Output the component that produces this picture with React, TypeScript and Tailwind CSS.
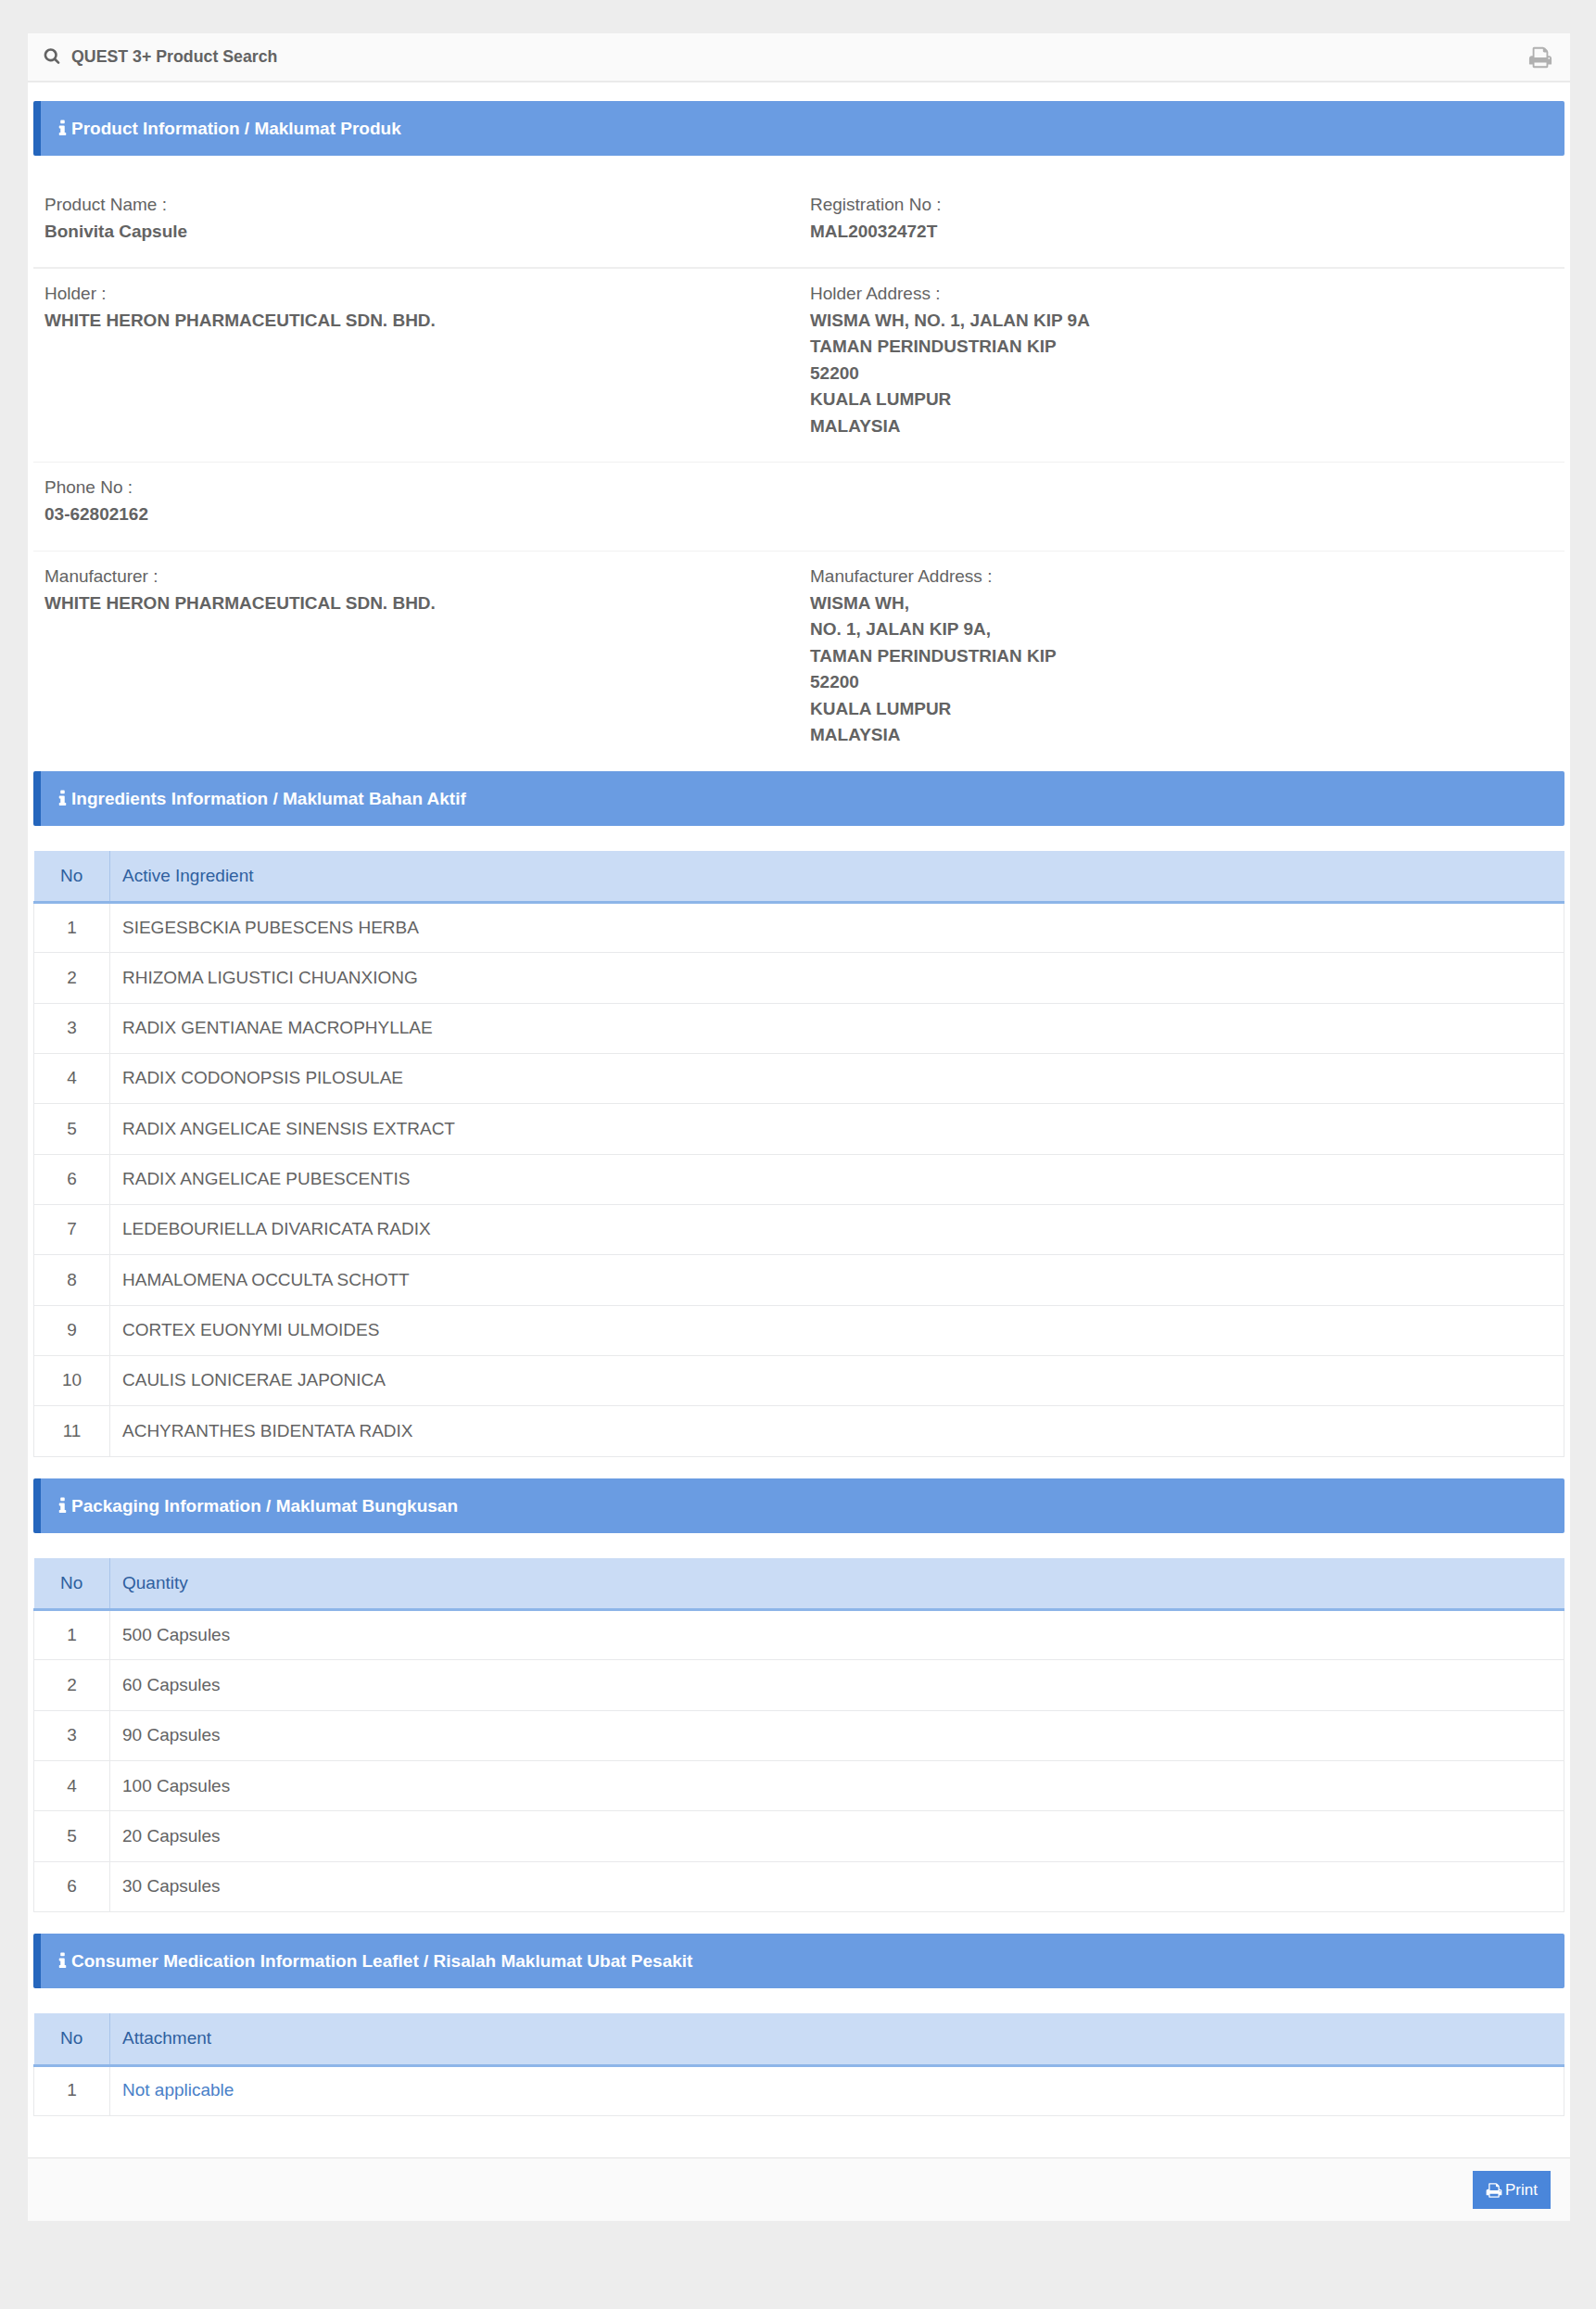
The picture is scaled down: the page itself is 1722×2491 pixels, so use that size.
import React from "react";
const ing = ["SIEGESBCKIA PUBESCENS HERBA","RHIZOMA LIGUSTICI CHUANXIONG","RADIX GENTIANAE MACROPHYLLAE","RADIX CODONOPSIS PILOSULAE","RADIX ANGELICAE SINENSIS EXTRACT","RADIX ANGELICAE PUBESCENTIS","LEDEBOURIELLA DIVARICATA RADIX","HAMALOMENA OCCULTA SCHOTT","CORTEX EUONYMI ULMOIDES","CAULIS LONICERAE JAPONICA","ACHYRANTHES BIDENTATA RADIX"];
const pack = ["500 Capsules","60 Capsules","90 Capsules","100 Capsules","20 Capsules","30 Capsules"];
const PRINT = "M448 1536h896v-256h-896v256zm0-640h896v-384h-160q-40 0-68-28t-28-68v-160h-640v640zm1152 64q0-26-19-45t-45-19-45 19-19 45 19 45 45 19 45-19 19-45zm128 0v416q0 13-9.5 22.5t-22.5 9.5h-224v160q0 40-28 68t-68 28h-960q-40 0-68-28t-28-68v-160h-224q-13 0-22.5-9.5t-9.5-22.5v-416q0-79 56.5-135.5t135.5-56.5h64v-544q0-40 28-68t68-28h672q40 0 88 20t76 48l152 152q28 28 48 76t20 88v256h64q79 0 135.5 56.5t56.5 135.5z";
const SEARCH = "M1216 832q0-185-131.5-316.5t-316.5-131.5-316.5 131.5-131.5 316.5 131.5 316.5 316.5 131.5 316.5-131.5 131.5-316.5zm512 832q0 52-38 90t-90 38q-54 0-90-38l-343-342q-179 124-399 124-143 0-273.5-55.5t-225-150-150-225-55.5-273.5 55.5-273.5 150-225 225-150 273.5-55.5 273.5 55.5 225 150 150 225 55.5 273.5q0 220-124 399l343 343q37 37 37 90z";
const INFO = "M1216 1344v128q0 26-19 45t-45 19h-512q-26 0-45-19t-19-45v-128q0-26 19-45t45-19h64v-384h-64q-26 0-45-19t-19-45v-128q0-26 19-45t45-19h384q26 0 45 19t19 45v576h64q26 0 45 19t19 45zm-128-1152v192q0 26-19 45t-45 19h-256q-26 0-45-19t-19-45v-192q0-26 19-45t45-19h256q26 0 45 19t19 45z";
function Ic({ d, className }: { d: string; className: string }) {
  return <svg viewBox="0 0 1792 1792" fill="currentColor" className={className}><path d={d}/></svg>;
}
function Head({ t, cls }: { t: string; cls: string }) {
  return <div className={`h-[59px] rounded-[2px] bg-[#6a9ce2] border-l-[8px] border-[#2566bd] pl-[13px] flex items-center text-white font-bold text-[19px] ${cls}`}><Ic d={INFO} className="w-[21px] h-[21px] shrink-0 -mr-[1px]"/><span className="pt-[2px]">{t}</span></div>;
}
function Table({ h, rows, link }: { h: string; rows: string[]; link?: boolean }) {
  return <table className="w-full border-collapse text-[19px] mt-[27px]">
    <thead><tr className="h-[56px] bg-[#cadcf5] text-[#2f609f]"><th className="w-[82px] font-normal border-r border-r-[#a9c5ea] border-b-[3px] border-b-[#8db5e8]">No</th><th className="font-normal text-left pl-[13px] border-b-[3px] border-b-[#8db5e8]">{h}</th></tr></thead>
    <tbody>{rows.map((r,i)=><tr key={i} className="h-[54.33px]"><td className="text-center border border-[#e8e9eb]">{i+1}</td><td className={`pl-[13px] border border-[#e8e9eb] ${link?"text-[#4a80c8]":""}`}>{r}</td></tr>)}</tbody>
  </table>;
}
function F({ l, v }: { l: string; v: string[] }) {
  return <div className="leading-[28.5px] text-[19px]"><div>{l}</div>{v.map(x=><div key={x} className="font-bold">{x}</div>)}</div>;
}
function Row({ a, b, cls }: { a: React.ReactNode; b?: React.ReactNode; cls: string }) {
  return <div className={`grid grid-cols-2 ${cls}`}><div className="px-[12px]">{a}</div><div className="px-[12px]">{b}</div></div>;
}
export default function App() {
  return <div className="min-h-[2491px] bg-[#ededed] pt-[36px] pl-[30px] pr-[28px] font-['Liberation_Sans',sans-serif] text-[#636363]">
    <div className="bg-white h-[2360px] flex flex-col">
      <div className="h-[53px] bg-[#fafafa] border-b-2 border-[#eaeaea] flex items-center pl-[17px] pr-[19px] font-bold text-[17.75px]"><Ic d={SEARCH} className="w-[18px] h-[18px] mr-[12px] -mt-[3px]"/>QUEST 3+ Product Search<Ic d={PRINT} className="w-[26px] h-[26px] ml-auto text-[#b0b0b0]"/></div>
      <div className="px-[6px] flex-1 pt-[20px]">
        <Head t="Product Information / Maklumat Produk" cls=""/>
        <Row cls="pt-[39px] pb-[24px] border-b-2 border-[#eeeeee]" a={<F l="Product Name :" v={["Bonivita Capsule"]}/>} b={<F l="Registration No :" v={["MAL20032472T"]}/>}/>
        <Row cls="pt-[13px] pb-[24px] border-b border-[#f1f1f1]" a={<F l="Holder :" v={["WHITE HERON PHARMACEUTICAL SDN. BHD."]}/>} b={<F l="Holder Address :" v={["WISMA WH, NO. 1, JALAN KIP 9A","TAMAN PERINDUSTRIAN KIP","52200","KUALA LUMPUR","MALAYSIA"]}/>}/>
        <Row cls="pt-[13px] pb-[25px] border-b border-[#f1f1f1]" a={<F l="Phone No :" v={["03-62802162"]}/>}/>
        <Row cls="pt-[13px] pb-[24px]" a={<F l="Manufacturer :" v={["WHITE HERON PHARMACEUTICAL SDN. BHD."]}/>} b={<F l="Manufacturer Address :" v={["WISMA WH,","NO. 1, JALAN KIP 9A,","TAMAN PERINDUSTRIAN KIP","52200","KUALA LUMPUR","MALAYSIA"]}/>}/>
        <Head t="Ingredients Information / Maklumat Bahan Aktif" cls=""/>
        <Table h="Active Ingredient" rows={ing}/>
        <Head t="Packaging Information / Maklumat Bungkusan" cls="mt-[23px]"/>
        <Table h="Quantity" rows={pack}/>
        <Head t="Consumer Medication Information Leaflet / Risalah Maklumat Ubat Pesakit" cls="mt-[23px]"/>
        <Table h="Attachment" rows={["Not applicable"]} link/>
      </div>
      <div className="h-[69px] bg-[#fafafa] border-t-2 border-[#eeeeee] flex items-center justify-end pr-[21px]"><button className="h-[41px] w-[84px] bg-[#4a86da] text-white text-[17px] flex items-center justify-center gap-[3px]"><Ic d={PRINT} className="w-[18px] h-[18px]"/>Print</button></div>
    </div>
  </div>;
}
